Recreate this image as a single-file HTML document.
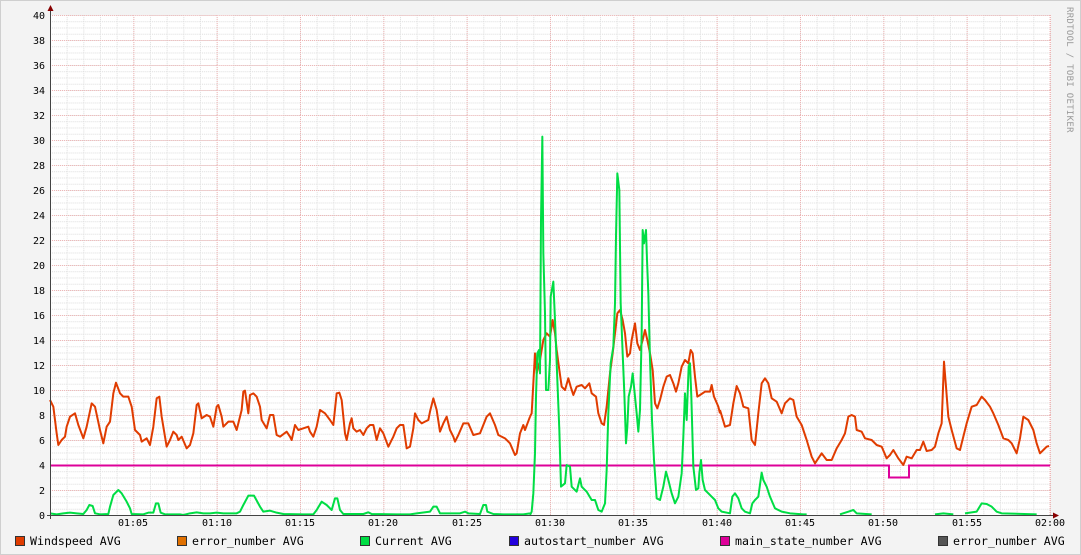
<!DOCTYPE html>
<html><head><meta charset="utf-8"><style>
html,body{margin:0;padding:0;background:#f3f3f3;}
svg{display:block;}
text{font-family:"DejaVu Sans Mono","Liberation Mono",monospace;}
</style></head><body>
<svg width="1081" height="555" viewBox="0 0 1081 555" xmlns="http://www.w3.org/2000/svg">
<defs>
<pattern id="minor" patternUnits="userSpaceOnUse" x="50" y="15" width="16.6667" height="6.25">
<path d="M0 0.5H16.667" stroke="#dcdcdc" stroke-width="1" stroke-dasharray="1,1" fill="none"/>
<path d="M0.5 0V6.25" stroke="#dcdcdc" stroke-width="1" stroke-dasharray="1,1" fill="none"/>
</pattern>
<pattern id="major" patternUnits="userSpaceOnUse" x="50" y="15" width="83.3333" height="25">
<path d="M0 0.5H83.333" stroke="#efb4b4" stroke-width="1" stroke-dasharray="1,1" fill="none"/>
<path d="M0.5 0V25" stroke="#efb4b4" stroke-width="1" stroke-dasharray="1,1" fill="none"/>
</pattern>
</defs>
<rect x="0.5" y="0.5" width="1080" height="554" fill="#f3f3f3" stroke="#cfcfcf"/>
<rect x="51" y="15" width="1000" height="500" fill="#fff"/>
<rect x="51" y="15" width="1000" height="500" fill="url(#minor)"/>
<rect x="51" y="15" width="1000" height="500" fill="url(#major)"/>

<g font-size="10" text-anchor="end" fill="#000">
<text x="45" y="19">40</text><text x="45" y="44">38</text><text x="45" y="69">36</text><text x="45" y="94">34</text><text x="45" y="119">32</text><text x="45" y="144">30</text><text x="45" y="169">28</text><text x="45" y="194">26</text><text x="45" y="219">24</text><text x="45" y="244">22</text><text x="45" y="269">20</text><text x="45" y="294">18</text><text x="45" y="319">16</text><text x="45" y="344">14</text><text x="45" y="369">12</text><text x="45" y="394">10</text><text x="45" y="419">8</text><text x="45" y="444">6</text><text x="45" y="469">4</text><text x="45" y="494">2</text><text x="45" y="519">0</text>
</g>
<g font-size="10" text-anchor="middle" fill="#000">
<text x="133" y="526">01:05</text><text x="217" y="526">01:10</text><text x="300" y="526">01:15</text><text x="383" y="526">01:20</text><text x="467" y="526">01:25</text><text x="550" y="526">01:30</text><text x="633" y="526">01:35</text><text x="717" y="526">01:40</text><text x="800" y="526">01:45</text><text x="883" y="526">01:50</text><text x="967" y="526">01:55</text><text x="1050" y="526">02:00</text>
</g>

<polyline fill="none" stroke="#dd0099" stroke-width="2" points="51,465.5 889,465.5 889,477.5 909,477.5 909,465.5 1050,465.5"/>

<g fill="none" stroke="#e03c00" stroke-width="2" stroke-linejoin="round">
<polyline vector-effect="non-scaling-stroke" transform="translate(50,370) scale(0.33333)" points="0,90 10,110 20,190 25,225 35,210 45,200 50,170 60,140 75,130 85,165 100,205 110,170 125,100 135,110 150,180 160,220 170,170 180,155 190,70 198,38 210,70 220,80 235,80 245,110 255,180 270,195 275,215 290,205 300,225 310,170 320,85 328,80 335,140 345,200 350,230 360,210 370,185 380,195 385,210 395,200 410,235 420,225 430,190 440,105 445,100 455,145 470,135 480,140 490,170 500,110 505,105 515,140 520,170 535,155 550,155 560,180 575,120 580,65 585,62 595,130 600,75 610,70 620,80 630,110 635,150 650,175 660,135 670,135 680,195 690,200 710,185 720,200 725,210 735,165 745,180 760,175 775,170 780,185 790,200 800,170 810,120 825,130 840,150 850,165 860,70 868,68 875,90 885,190 890,210 900,160 905,145 910,175 920,185 930,180 940,195 950,175 960,165 970,165 980,210 990,175 1000,190 1015,230 1030,200 1040,175 1050,165 1060,165 1070,235 1080,230 1090,175 1095,130 1105,150 1115,160 1125,155 1135,150 1140,125 1150,85 1160,120 1170,185 1180,160 1190,140 1200,180 1210,200 1215,215 1225,195 1240,160 1255,160 1270,195 1290,190 1310,140 1320,130 1335,165 1345,195 1365,205 1380,220 1395,255 1400,250 1410,190 1420,165 1425,180 1440,140"/>
<polyline vector-effect="non-scaling-stroke" transform="translate(500,120) scale(0.33333)" points="90,890 95,880 100,790 105,700 110,760 120,720 130,660 140,640 150,650 158,600 165,640 170,690 178,750 185,800 195,810 205,775 212,800 220,825 230,800 245,795 255,805 268,790 275,820 288,830 295,880 305,910 312,915 320,860 330,760 338,700 345,640 352,580 360,570 368,600 375,640 382,710 390,700 395,660 405,610 412,670 420,690 428,660 435,630 442,660 450,700 458,750 465,850 472,865 480,840 490,800 500,770 510,765 520,790 528,815 535,790 545,740 555,720 565,730 572,690 578,700 585,770 592,830 600,825 615,815 630,815 635,795 642,830 655,860 660,880"/>
<polyline vector-effect="non-scaling-stroke" transform="translate(690,350) scale(0.33333)" points="90,180 105,230 120,225 130,160 140,108 150,130 160,170 175,175 185,270 195,285 205,190 215,100 225,85 235,100 245,145 260,155 275,190 285,160 300,145 310,150 320,200 335,225 350,270 365,320 375,340 385,325 395,310 410,330 425,330 440,295 455,270 465,250 475,200 485,195 495,200 500,240 515,245 525,265 545,270 560,285 575,290 590,325 600,315 610,300 625,325 640,345 650,320 665,325 680,300 690,300 700,275 710,303 725,300 735,290 745,250 755,220 762,35 768,110 775,200 785,240 800,295 810,300 820,260 830,220 845,170 860,165 875,140 885,150 900,170 910,190 925,225 940,265 955,270 965,280 980,310 990,265 1000,200 1015,210 1030,240 1040,280 1050,310 1060,300 1070,290 1077,288"/>
</g>

<g fill="none" stroke="#00dd44" stroke-width="2" stroke-linejoin="round">
<polyline vector-effect="non-scaling-stroke" transform="translate(50,370) scale(0.33333)" points="0,430 20,433 40,430 60,428 80,430 100,432 110,420 118,405 128,408 135,430 150,433 175,432 180,410 190,375 205,360 215,370 230,395 240,415 245,432 280,433 295,428 310,428 318,400 325,400 332,428 345,433 390,433 400,435 420,430 440,427 460,430 480,430 500,428 520,430 560,430 570,425 580,405 595,377 612,377 630,410 640,425 660,422 680,428 700,432 760,433 790,433 800,420 815,395 830,405 845,420 855,385 862,385 870,420 880,432 940,432 955,427 965,432 1040,433 1080,433 1100,430 1140,425 1150,410 1160,410 1170,430 1230,430 1245,425 1255,430 1290,432 1300,405 1308,405 1312,425 1330,432 1360,433 1420,433 1440,430"/>
<polyline vector-effect="non-scaling-stroke" transform="translate(500,120) scale(0.33333)" points="90,1185 95,1175 100,1120 105,1000 108,830 112,700 117,690 120,760 123,300 127,50 130,400 135,580 138,810 145,810 150,720 152,530 160,485 165,600 172,780 178,930 183,1100 195,1090 200,1035 210,1040 215,1100 230,1115 240,1075 245,1100 260,1115 275,1140 285,1140 295,1170 305,1175 315,1150 320,1050 325,880 332,730 340,680 345,550 348,350 352,160 358,210 362,550 368,700 373,820 378,970 382,920 386,830 393,800 398,760 404,820 410,880 415,935 420,870 425,640 428,330 432,370 438,330 441,420 445,520 450,720 456,900 462,1020 470,1135 480,1140 490,1100 498,1055 505,1080 515,1120 525,1150 535,1130 545,1060 550,950 555,820 560,900 566,740 570,730 574,830 580,1040 588,1110 595,1105 598,1060 603,1020 608,1080 615,1110 625,1120 635,1130 645,1140 655,1165 660,1170"/>
<polyline vector-effect="non-scaling-stroke" transform="translate(690,350) scale(0.33333)" points="90,480 95,485 120,490 127,440 135,430 145,445 155,475 165,485 180,490 187,460 195,450 205,440 215,368 220,390 230,410 240,440 255,475 275,485 300,490 340,493 350,493"/>
<polyline vector-effect="non-scaling-stroke" transform="translate(690,350) scale(0.33333)" points="450,493 475,485 490,480 500,490 545,493"/>
<polyline vector-effect="non-scaling-stroke" transform="translate(690,350) scale(0.33333)" points="735,493 760,490 790,493"/>
<polyline vector-effect="non-scaling-stroke" transform="translate(690,350) scale(0.33333)" points="825,490 860,485 875,460 890,462 905,470 920,485 935,490 1040,493"/>
</g>

<line x1="50.5" y1="10" x2="50.5" y2="519" stroke="#444" stroke-width="1"/>
<line x1="47" y1="515.5" x2="1055" y2="515.5" stroke="#444" stroke-width="1"/>
<path d="M47.5 11 L53.5 11 L50.5 5 Z" fill="#880000"/>
<path d="M1053 512.5 L1053 518.5 L1059 515.5 Z" fill="#880000"/>

<text transform="translate(1067,7) rotate(90)" font-size="9" fill="#999" letter-spacing="0.3">RRDTOOL / TOBI OETIKER</text>

<g font-size="11.6" fill="#000">
<rect x="15.5" y="536.5" width="9" height="9" fill="#e03c00" stroke="#333"/><text x="30" y="545">Windspeed AVG</text>
<rect x="177.5" y="536.5" width="9" height="9" fill="#e07000" stroke="#333"/><text x="192" y="545">error_number AVG</text>
<rect x="360.5" y="536.5" width="9" height="9" fill="#00dd44" stroke="#333"/><text x="375" y="545">Current AVG</text>
<rect x="509.5" y="536.5" width="9" height="9" fill="#2200dd" stroke="#333"/><text x="524" y="545">autostart_number AVG</text>
<rect x="720.5" y="536.5" width="9" height="9" fill="#dd0099" stroke="#333"/><text x="735" y="545">main_state_number AVG</text>
<rect x="938.5" y="536.5" width="9" height="9" fill="#555" stroke="#333"/><text x="953" y="545">error_number AVG</text>
</g>
</svg>
</body></html>
